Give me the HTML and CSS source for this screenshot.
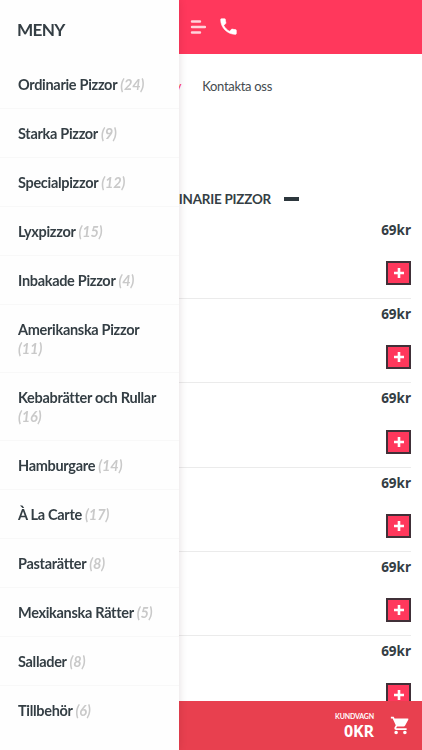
FILE: index.html
```html
<!DOCTYPE html>
<html lang="sv">
<head>
    <meta charset="UTF-8">
    <meta name="viewport" content="width=device-width, initial-scale=1.0">
    <title>Meny</title>
    <link rel="stylesheet" href="styles.css">
</head>
<body>
    <!-- Side menu -->
    <aside class="side-menu">
        <h2>MENY</h2>
        <ul>
            <li><a>Ordinarie Pizzor <em>(24)</em></a></li>
            <li><a>Starka Pizzor <em>(9)</em></a></li>
            <li><a>Specialpizzor <em>(12)</em></a></li>
            <li><a>Lyxpizzor <em>(15)</em></a></li>
            <li><a>Inbakade Pizzor <em>(4)</em></a></li>
            <li><a>Amerikanska Pizzor <em>(11)</em></a></li>
            <li><a>Kebabrätter och Rullar <em>(16)</em></a></li>
            <li><a>Hamburgare <em>(14)</em></a></li>
            <li><a>À La Carte <em>(17)</em></a></li>
            <li><a>Pastarätter <em>(8)</em></a></li>
            <li><a>Mexikanska Rätter <em>(5)</em></a></li>
            <li><a>Sallader <em>(8)</em></a></li>
            <li><a>Tillbehör <em>(6)</em></a></li>
        </ul>
    </aside>

    <!-- Page -->
    <div class="page">
        <header>
            <svg class="bars" width="16" height="16" viewBox="0 0 16 16">
                <path d="M2 2.5h8M2 8h13M2 13.5h8" stroke="#ffd3db" stroke-width="2.4" stroke-linecap="round"/>
            </svg>
            <svg class="phone" width="21" height="21" viewBox="0 0 24 24">
                <path fill="#fff" stroke="#fff" stroke-width=".6" d="M6.62 10.79c1.44 2.83 3.76 5.14 6.59 6.59l2.2-2.2c.27-.27.67-.36 1.02-.24 1.12.37 2.33.57 3.57.57.55 0 1 .45 1 1V20c0 .55-.45 1-1 1-9.39 0-17-7.61-17-17 0-.55.45-1 1-1h3.5c.55 0 1 .45 1 1 0 1.25.2 2.45.57 3.57.11.35.03.74-.25 1.02l-2.2 2.2z"/>
            </svg>
        </header>
        <nav>
            <a class="current">Meny</a>
            <a>Kontakta oss</a>
        </nav>
        <main>
            <h3>ORDINARIE PIZZOR <span class="minus"></span></h3>
            <div class="product"><strong>69kr</strong><button><svg width="10" height="10" viewBox="0 0 10 10"><path d="M5 0v10M0 5h10" stroke="#fff" stroke-width="2.6"/></svg></button></div>
            <div class="product"><strong>69kr</strong><button><svg width="10" height="10" viewBox="0 0 10 10"><path d="M5 0v10M0 5h10" stroke="#fff" stroke-width="2.6"/></svg></button></div>
            <div class="product"><strong>69kr</strong><button><svg width="10" height="10" viewBox="0 0 10 10"><path d="M5 0v10M0 5h10" stroke="#fff" stroke-width="2.6"/></svg></button></div>
            <div class="product"><strong>69kr</strong><button><svg width="10" height="10" viewBox="0 0 10 10"><path d="M5 0v10M0 5h10" stroke="#fff" stroke-width="2.6"/></svg></button></div>
            <div class="product"><strong>69kr</strong><button><svg width="10" height="10" viewBox="0 0 10 10"><path d="M5 0v10M0 5h10" stroke="#fff" stroke-width="2.6"/></svg></button></div>
            <div class="product"><strong>69kr</strong><button><svg width="10" height="10" viewBox="0 0 10 10"><path d="M5 0v10M0 5h10" stroke="#fff" stroke-width="2.6"/></svg></button></div>
        </main>
        <!-- Cart -->
        <footer>
            <div class="cart-sum">
                <span>KUNDVAGN</span>
                <b>0KR</b>
            </div>
            <svg width="21" height="21" viewBox="0 0 24 24">
                <path fill="#fff" d="M7 18c-1.1 0-1.99.9-1.99 2S5.9 22 7 22s2-.9 2-2-.9-2-2-2zM1 2v2h2l3.6 7.59-1.35 2.45c-.16.28-.25.61-.25.96 0 1.1.9 2 2 2h12v-2H7.42c-.14 0-.25-.11-.25-.25l.03-.12.9-1.63h7.45c.75 0 1.41-.41 1.75-1.03l3.58-6.49A1 1 0 0 0 20 4H5.21l-.94-2H1zm16 16c-1.1 0-1.99.9-1.99 2s.89 2 1.99 2 2-.9 2-2-.9-2-2-2z"/>
            </svg>
        </footer>
    </div>
</body>
</html>
```

FILE: styles.css
```css
* {
    margin: 0;
    padding: 0;
    box-sizing: border-box;
}

body {
    font-family: Lato, sans-serif;
    color: #343e44;
    background-color: #fff;
    height: 100vh;
    overflow: hidden;
}

/* Side menu lies over the page */
.side-menu {
    position: fixed;
    top: 0;
    left: 0;
    z-index: 10;
    width: 179px;
    height: 100vh;
    background-color: #fefefe;
    box-shadow: 0 0 8px rgba(60, 0, 20, 0.14);
}

.side-menu h2 {
    height: 60px;
    padding-left: 17px;
    font-size: 17.2px;
    font-weight: 700;
    letter-spacing: -0.7px;
    line-height: 60px;
}

.side-menu ul {
    list-style: none;
}

.side-menu li {
    padding: 14.6px 18px 14.2px;
    border-bottom: 1px solid #f8f8f8;
    font-size: 14.5px;
    font-weight: 700;
    letter-spacing: -0.31px;
    line-height: 19.2px;
}

.side-menu li:last-child {
    border-bottom: none;
}

.side-menu em {
    color: #c9c9c9;
    font-weight: 700;
    letter-spacing: -0.1px;
}

.page {
    height: 100vh;
    display: flex;
    flex-direction: column;
}

header {
    flex: none;
    height: 54px;
    display: flex;
    align-items: center;
    gap: 12px;
    padding: 0 0 1px 190px;
    background-color: #ff385c;
}

nav {
    flex: none;
    height: 65px;
    display: flex;
    align-items: center;
    justify-content: flex-end;
    gap: 21px;
    padding: 0 150px 2px 0;
    font-size: 13px;
    letter-spacing: -0.3px;
    color: #454b4f;
}

nav .current {
    color: #ff385c;
}

main {
    flex: 1;
    min-height: 0;
    overflow: hidden;
    padding: 70px 11px 0;
}

h3 {
    display: flex;
    align-items: center;
    justify-content: flex-end;
    gap: 13px;
    height: 20px;
    margin-bottom: 5.5px;
    padding-right: 112px;
    font-size: 13.4px;
    font-weight: 700;
    letter-spacing: -0.2px;
}

.minus {
    width: 15px;
    height: 4px;
    background-color: #2d373d;
}

.product {
    height: 84.4px;
    display: flex;
    flex-direction: column;
    align-items: flex-end;
    justify-content: space-between;
    padding: 6px 0 13px;
    border-bottom: 1px solid #ebebeb;
}

.product strong {
    font-family: "Noto Sans", sans-serif;
    font-size: 13.5px;
    font-weight: 700;
    line-height: 18px;
}

.product button {
    width: 25px;
    height: 24px;
    display: flex;
    align-items: center;
    justify-content: center;
    background-color: #ff385c;
    border: 2px solid #403038;
}

footer {
    flex: none;
    height: 49px;
    display: flex;
    align-items: center;
    justify-content: flex-end;
    gap: 16px;
    padding: 0 11px 1px 0;
    background-color: #e8404f;
    color: #fff;
}

.cart-sum {
    display: flex;
    flex-direction: column;
    align-items: flex-end;
    gap: 2px;
}

.cart-sum span {
    font-size: 7px;
    font-weight: 700;
    letter-spacing: -0.15px;
    line-height: 9px;
}

.cart-sum b {
    font-family: "Open Sans", sans-serif;
    font-size: 16px;
    font-weight: 700;
    letter-spacing: -0.1px;
    line-height: 16px;
}
```
